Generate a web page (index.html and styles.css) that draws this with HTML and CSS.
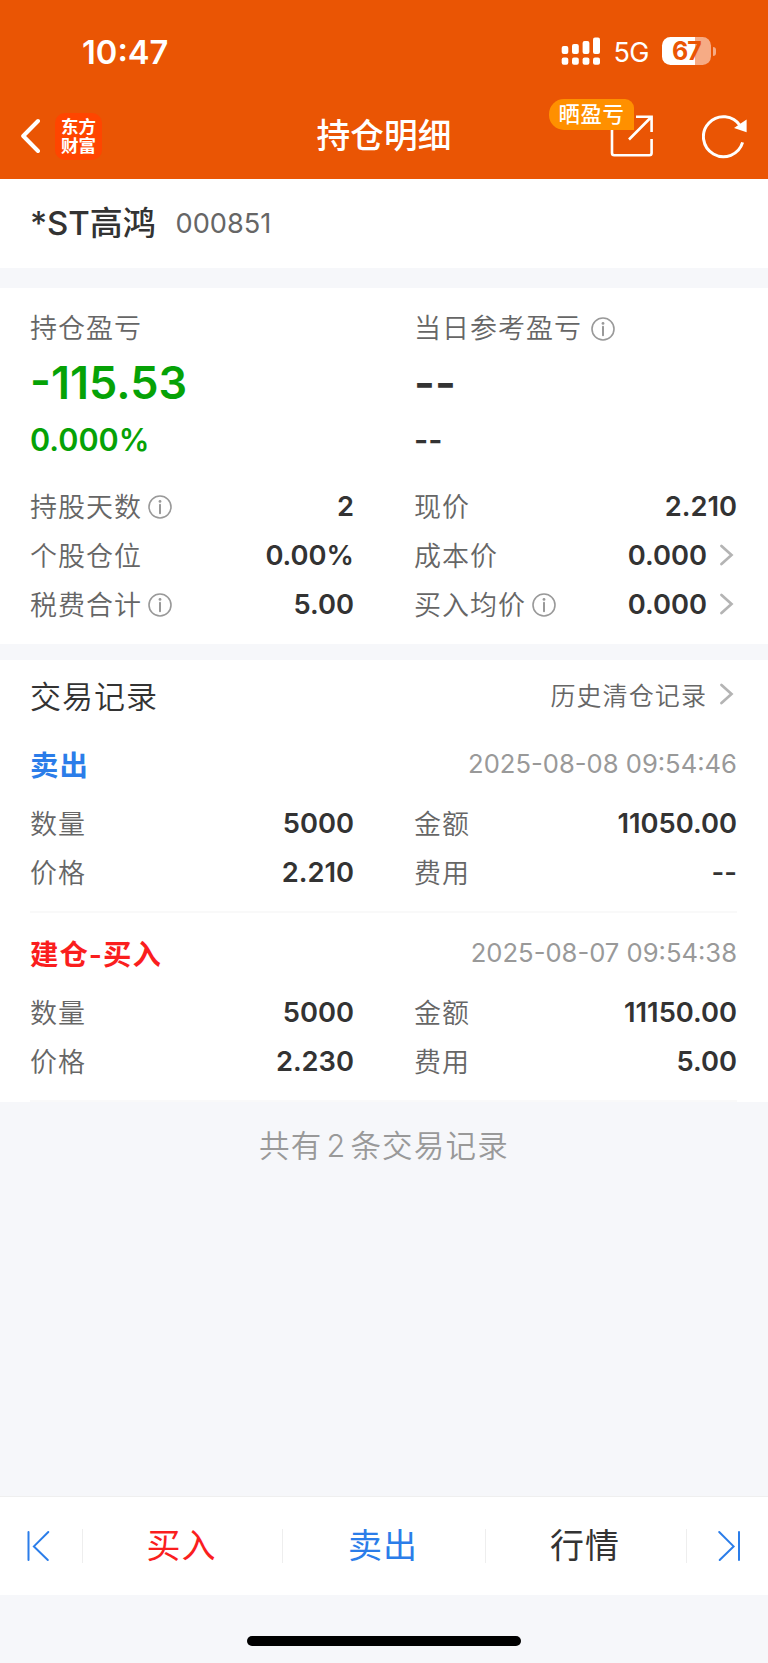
FILE: index.html
```
<!DOCTYPE html>
<html lang="zh-CN">
<head>
    <meta charset="UTF-8">
    <meta name="viewport" content="width=device-width, initial-scale=1.0">
    <title>持仓明细</title>
    <link rel="stylesheet" href="styles.css">
</head>
<body>
    <!-- Shared icons -->
    <svg class="sprite" width="0" height="0">
        <symbol id="info" viewBox="0 0 24 24">
            <circle cx="12" cy="12" r="11" fill="none" stroke="#999" stroke-width="1.6"/>
            <circle cx="12" cy="6.4" r="1.4" fill="#999"/>
            <path d="M12 9.8v8.4" fill="none" stroke="#999" stroke-width="2" stroke-linecap="round"/>
        </symbol>
        <symbol id="arrow" viewBox="0 0 14 22">
            <path d="M1.5 2l10 9L1.5 20" fill="none" stroke="#b4b4b4" stroke-width="2.7" stroke-linecap="round"/>
        </symbol>
    </svg>

    <header>
        <div class="status-bar">
            <span class="time">10:47</span>
            <div class="status-icons">
                <svg class="signal" width="40" height="28" viewBox="0 0 40 28" fill="#fff">
                    <rect x="0.7" y="9" width="6.6" height="8" rx="2"/>
                    <rect x="11" y="7" width="6.8" height="10" rx="2"/>
                    <rect x="21.6" y="4" width="6.8" height="13" rx="2"/>
                    <rect x="32" y="0.5" width="7" height="16.5" rx="2"/>
                    <rect x="0.7" y="20.4" width="6.6" height="7.3" rx="2"/>
                    <rect x="11" y="20.4" width="6.8" height="7.3" rx="2"/>
                    <rect x="21.6" y="20.4" width="6.8" height="7.3" rx="2"/>
                    <rect x="32" y="20.4" width="7" height="7.3" rx="2"/>
                </svg>
                <span class="network">5G</span>
                <span class="battery">67</span>
                <span class="battery-cap"></span>
            </div>
        </div>
        <div class="title-bar">
            <div class="title-left">
                <svg width="20" height="36" viewBox="0 0 20 36">
                    <path d="M18 3L3.2 18 18 33" fill="none" stroke="#fff" stroke-width="4" stroke-linecap="round" stroke-linejoin="round"/>
                </svg>
                <div class="logo">东方<br>财富</div>
            </div>
            <h1>持仓明细</h1>
            <div class="title-right">
                <div class="share">
                    <svg width="44" height="44" viewBox="0 0 44 44" fill="none" stroke="#fff" stroke-width="2.6">
                        <path d="M3 14v25q0 2.3 2.3 2.3h35q2.3 0 2.3-2.3V25"/>
                        <path d="M27 2.8h15.6v15.2M41.8 3.5L20 25.5"/>
                    </svg>
                    <span class="badge">晒盈亏</span>
                </div>
                <svg width="46" height="46" viewBox="0 0 46 46">
                    <path d="M38.2 12.8A20 20 0 1 0 40.6 29.4" fill="none" stroke="#fff" stroke-width="3"/>
                    <path d="M44.6 6.4v12.8l-12.6-4.2z" fill="#fff"/>
                </svg>
            </div>
        </div>
    </header>

    <section class="stock">
        <h2>*ST高鸿</h2>
        <span class="code">000851</span>
    </section>

    <section class="position">
        <div class="columns summary">
            <div>
                <p class="label">持仓盈亏</p>
                <p class="profit green">-115.53</p>
                <p class="rate green">0.000%</p>
            </div>
            <div>
                <p class="label">当日参考盈亏<svg class="info wide"><use href="#info"/></svg></p>
                <p class="profit">--</p>
                <p class="rate">--</p>
            </div>
        </div>
        <div class="columns">
            <div class="row"><span class="label">持股天数<svg class="info"><use href="#info"/></svg></span><b>2</b></div>
            <div class="row"><span class="label">现价</span><b>2.210</b></div>
            <div class="row"><span class="label">个股仓位</span><b>0.00%</b></div>
            <div class="row"><span class="label">成本价</span><b>0.000<svg class="arrow"><use href="#arrow"/></svg></b></div>
            <div class="row"><span class="label">税费合计<svg class="info"><use href="#info"/></svg></span><b>5.00</b></div>
            <div class="row"><span class="label">买入均价<svg class="info"><use href="#info"/></svg></span><b>0.000<svg class="arrow"><use href="#arrow"/></svg></b></div>
        </div>
    </section>

    <section class="records">
        <div class="records-title">
            <h3>交易记录</h3>
            <a class="history">历史清仓记录<svg class="arrow"><use href="#arrow"/></svg></a>
        </div>

        <div class="record">
            <div class="record-head">
                <span class="type blue">卖出</span>
                <span class="date">2025-08-08 09:54:46</span>
            </div>
            <div class="columns">
                <div class="row"><span class="label">数量</span><b>5000</b></div>
                <div class="row"><span class="label">金额</span><b>11050.00</b></div>
                <div class="row"><span class="label">价格</span><b>2.210</b></div>
                <div class="row"><span class="label">费用</span><b>--</b></div>
            </div>
        </div>

        <div class="record">
            <div class="record-head">
                <span class="type red">建仓-买入</span>
                <span class="date">2025-08-07 09:54:38</span>
            </div>
            <div class="columns">
                <div class="row"><span class="label">数量</span><b>5000</b></div>
                <div class="row"><span class="label">金额</span><b>11150.00</b></div>
                <div class="row"><span class="label">价格</span><b>2.230</b></div>
                <div class="row"><span class="label">费用</span><b>5.00</b></div>
            </div>
        </div>
    </section>

    <p class="total">共有<span>2</span>条交易记录</p>

    <nav>
        <a class="step">
            <svg width="26" height="34" viewBox="0 0 26 34" fill="none" stroke="#2b7de9" stroke-width="2" stroke-linecap="round">
                <path d="M1.5 3v28M21.3 3L6.9 17.4 20.8 31"/>
            </svg>
        </a>
        <a class="red">买入</a>
        <a class="blue">卖出</a>
        <a>行情</a>
        <a class="step">
            <svg width="26" height="34" viewBox="0 0 26 34" fill="none" stroke="#2b7de9" stroke-width="2" stroke-linecap="round">
                <path d="M24 3v28M4.2 3l14.4 14.4L4.7 31"/>
            </svg>
        </a>
    </nav>
    <div class="home-bar"></div>
</body>
</html>
```
FILE: styles.css
```
* {
    box-sizing: border-box;
}

body {
    display: flex;
    flex-direction: column;
    height: 1663px;
    margin: 0;
    font-family: Inter, "Noto Sans CJK SC", sans-serif;
    background-color: #f6f7fa;
    color: #333;
}

h1, h2, h3, p {
    margin: 0;
    font-weight: 500;
}

svg {
    flex: none;
}

.sprite {
    position: absolute;
}

.red {
    color: #fa1e1e;
}

.blue {
    color: #2b7de9;
}

.green {
    color: #06a206;
}

/* Header */
header {
    height: 179px;
    background-color: #ea5504;
    color: #fff;
}

.status-bar {
    display: flex;
    justify-content: space-between;
    height: 94px;
    padding: 10px 52px 0 82px;
}

.time {
    line-height: 84px;
    font-size: 32.7px;
    font-weight: 600;
}

.status-icons {
    display: flex;
    align-items: center;
    height: 82px;
}

.network {
    margin: 2px 13px 0 12px;
    font-size: 27px;
    letter-spacing: -0.5px;
}

.battery {
    width: 49px;
    height: 28px;
    border-radius: 8.5px;
    background: linear-gradient(to right, #fff 33px, #f6ab85 33px);
    color: #ea5504;
    font-size: 25px;
    font-weight: 700;
    line-height: 28px;
    text-align: center;
    letter-spacing: -0.8px;
}

.battery-cap {
    width: 3px;
    height: 9px;
    margin-left: 2px;
    border-radius: 0 4px 4px 0;
    background-color: #f6ab85;
}

.title-bar {
    display: grid;
    grid-template-columns: 1fr auto 1fr;
    align-items: center;
    height: 84px;
    padding: 0 20px;
}

.title-left {
    display: flex;
    align-items: center;
    gap: 15px;
}

.logo {
    width: 47px;
    height: 47px;
    padding-top: 3px;
    border-radius: 10px;
    background-color: #ff4500;
    font-family: "Noto Sans CJK SC", sans-serif;
    font-size: 17.5px;
    font-weight: 700;
    line-height: 19.5px;
    text-align: center;
}

.title-bar h1 {
    font-size: 33.7px;
    line-height: 48px;
}

.title-right {
    display: flex;
    align-items: center;
    justify-content: flex-end;
    gap: 49px;
}

.share {
    position: relative;
    height: 44px;
}

.badge {
    position: absolute;
    right: 19px;
    bottom: 28px;
    width: 85px;
    height: 31px;
    border-radius: 15px 9px 0 15px;
    background-color: #ff9000;
    font-size: 21.3px;
    font-weight: 500;
    line-height: 30px;
    letter-spacing: 0.7px;
    text-align: center;
}

/* Stock name */
.stock {
    display: flex;
    align-items: center;
    gap: 20px;
    height: 89px;
    margin-bottom: 20px;
    padding: 0 30px;
    background-color: #fff;
}

.stock h2 {
    padding-bottom: 5px;
    font-size: 33px;
    letter-spacing: -0.1px;
}

.code {
    color: #666;
    font-size: 27.2px;
}

/* Position figures */
.position {
    height: 356px;
    margin-bottom: 16px;
    padding: 15px 31px 0 30px;
    background-color: #fff;
}

.columns {
    display: grid;
    grid-template-columns: 324px 323px;
    column-gap: 60px;
}

.summary {
    height: 179px;
}

.label {
    display: flex;
    align-items: center;
    padding-top: 1px;
    color: #666;
    font-size: 27px;
    font-weight: 350;
    line-height: 49px;
    letter-spacing: 1px;
}

.info {
    width: 24px;
    height: 24px;
    margin-left: 6px;
}

.info.wide {
    margin-left: 9px;
}

.profit {
    font-size: 45px;
    font-weight: 600;
    line-height: 60px;
}

.rate {
    font-size: 30.6px;
    line-height: 54px;
    font-weight: 600;
}

.row {
    display: flex;
    justify-content: space-between;
    height: 49px;
}

.row b {
    display: flex;
    align-items: center;
    padding-bottom: 1px;
    font-size: 27.3px;
    font-weight: 600;
}

.arrow {
    width: 14px;
    height: 22px;
    margin: 0 3px 0 13px;
}

/* Trade records */
.records {
    height: 442px;
    padding: 7px 31px 0 30px;
    background-color: #fff;
}

.records-title {
    display: flex;
    align-items: center;
    justify-content: space-between;
    height: 57px;
    padding-bottom: 3px;
}

.records-title h3 {
    font-size: 31px;
    font-weight: 350;
    letter-spacing: 1px;
}

.history {
    display: flex;
    align-items: center;
    color: #666;
    font-size: 25px;
    font-weight: 350;
    letter-spacing: 1.1px;
}

.record {
    height: 189px;
    padding: 12px 0 0;
    border-bottom: 2px solid #f9f9f9;
}

.record-head {
    display: flex;
    align-items: center;
    justify-content: space-between;
    height: 63px;
    padding-bottom: 8px;
}

.type {
    font-size: 28.4px;
    font-weight: 600;
    letter-spacing: 1px;
}

.date {
    color: #999;
    font-size: 25.6px;
    font-weight: 400;
}

.total {
    margin-top: 21px;
    color: #999;
    font-size: 30.5px;
    font-weight: 350;
    line-height: 46px;
    letter-spacing: 1.2px;
    text-align: center;
}

.total span {
    margin: 0 4px;
}

/* Bottom navigation */
nav {
    display: grid;
    grid-template-columns: 83px 200px 203px 201px 81px;
    align-items: center;
    height: 99px;
    margin-top: auto;
    border-top: 1px solid #efefef;
    background-color: #fff;
}

nav a {
    height: 34px;
    padding-right: 2px;
    border-right: 1px solid #eee;
    font-size: 34px;
    font-weight: 400;
    line-height: 34px;
    letter-spacing: 1px;
    text-align: center;
}

nav a:last-child {
    padding-right: 0;
    border-right: none;
}

.home-bar {
    width: 274px;
    height: 10px;
    margin: 41px auto 17px;
    border-radius: 5px;
    background-color: #000;
}
```
